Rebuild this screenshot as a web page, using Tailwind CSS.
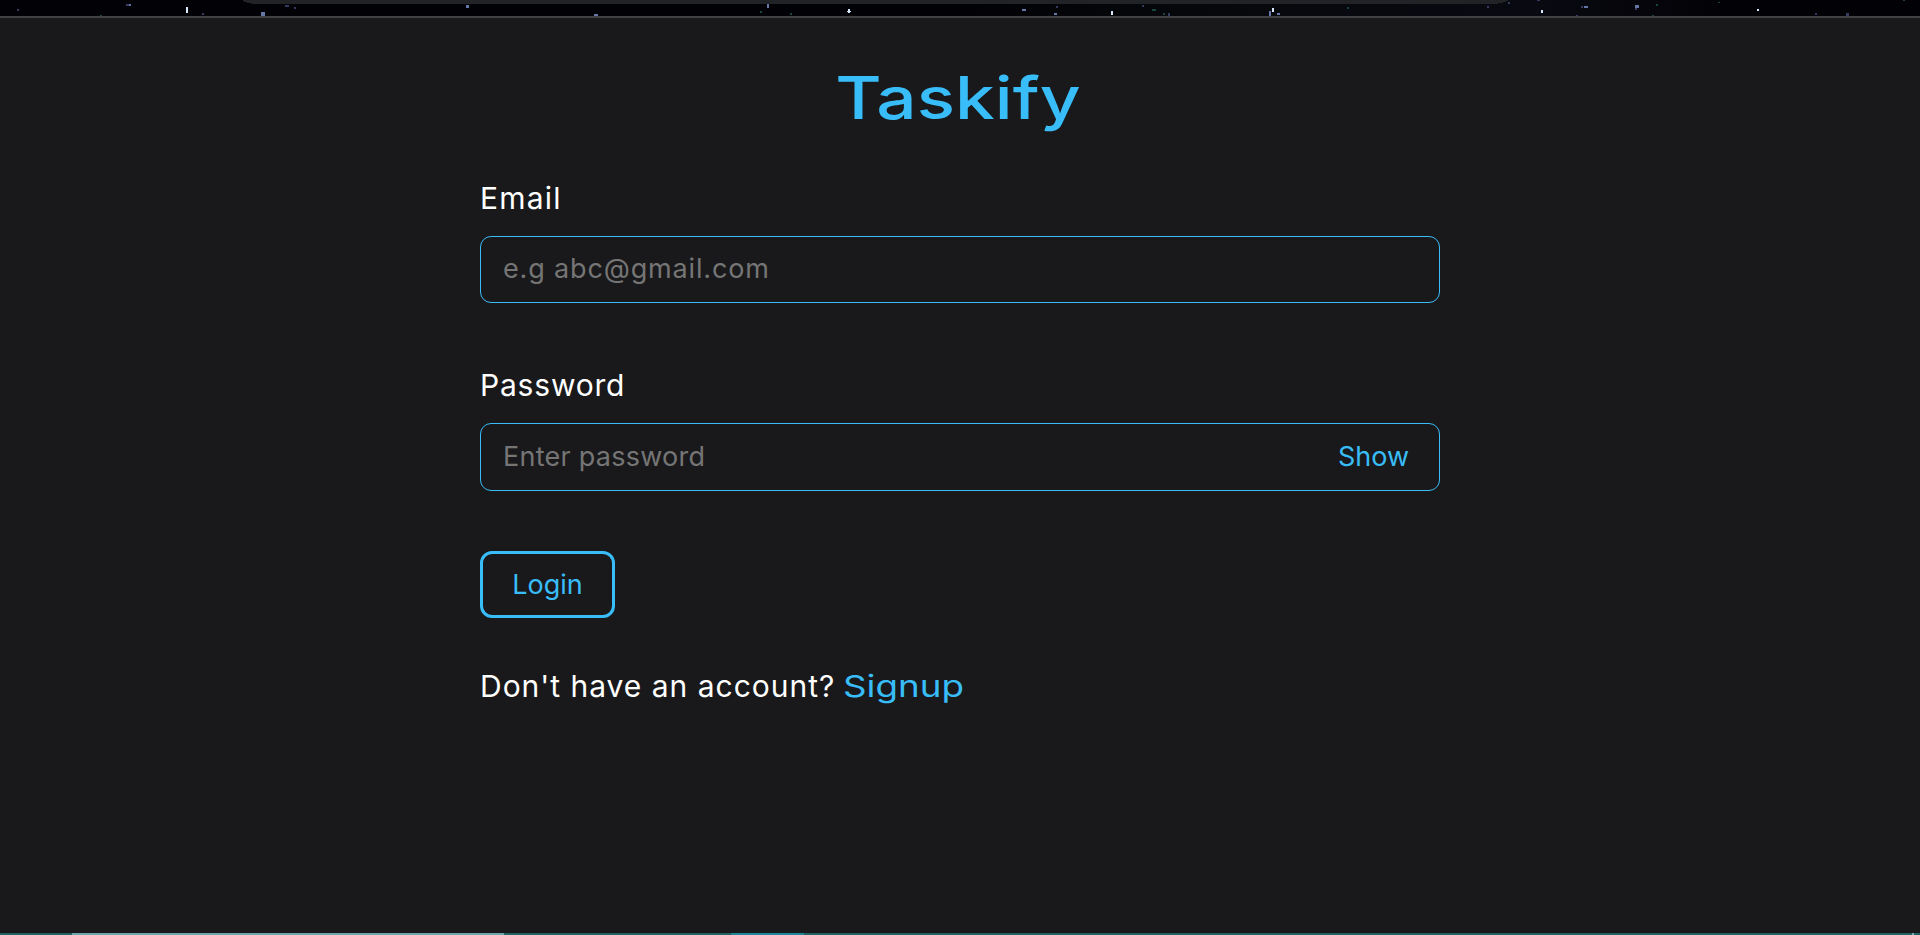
<!DOCTYPE html>
<html lang="en">
<head>
<meta charset="utf-8">
<title>Taskify</title>
<script src="https://cdn.jsdelivr.net/npm/@tailwindcss/browser@4"></script>
</head>
<body class="flex h-[935px] flex-col overflow-hidden bg-[#19191b] font-['Inter',sans-serif] text-white">
<header class="h-[18px] shrink-0 border-b-2 border-[#414143] bg-[#020206]">
<svg class="block" width="1920" height="16" viewBox="0 0 1920 16" shape-rendering="crispEdges">
<defs><linearGradient id="sky"><stop offset="0" stop-color="#020206"/><stop offset=".5" stop-color="#020206"/><stop offset=".66" stop-color="#07090d"/><stop offset=".8" stop-color="#090911"/><stop offset=".9" stop-color="#020206"/></linearGradient></defs>
<rect width="1920" height="16" fill="url(#sky)"/>
<path d="M242 0Q246 4 258 4H1490Q1503 4 1509 0Z" fill="#222326"/>
<g fill="#353a60"><path d="M126 4h3v2h-3zM202 13h2v2h-2zM285 5h4v2h-4zM294 7h2v2h-2zM17 9h2v2h-2zM1056 6h2v2h-2zM1142 5h2v2h-2zM1168 13h2v3h-2zM1487 6h2v2h-2zM1508 2h2v2h-2zM1537 0h3v1h-3zM1576 15h2v1h-2zM1581 6h2v2h-2zM1635 8h2v2h-2zM1815 13h2v2h-2zM1846 13h3v3h-3z"/></g>
<g fill="#6476a6"><path d="M129 4h2v2h-2zM261 12h4v4h-4zM466 5h3v3h-3zM594 14h4v2h-4zM767 4h2v4h-2zM1022 9h4v2h-4zM1054 13h3v2h-3zM1584 6h4v2h-4zM1635 5h4v3h-4zM1269 11h2v6h-2zM1277 13h3v2h-3z"/></g>
<g fill="#d7eaff"><path d="M186 7h2v6h-2zM848 9h2v4h-2zM847 11h4v1h-4zM1111 11h2v4h-2zM1272 8h2v4h-2zM1541 10h2v3h-2zM1757 9h2v2h-2z"/></g>
<g fill="#174340"><path d="M100 15h2v1h-2zM760 11h2v2h-2zM790 13h2v2h-2zM1152 9h4v2h-4zM1163 13h2v2h-2zM1347 7h2v2h-2zM1652 15h2v1h-2zM1656 4h2v2h-2zM1718 2h2v1h-2zM1903 0h2v1h-2z"/></g>
</svg>
</header>
<main class="mx-auto flex w-[960px] grow flex-col pt-[40px]">
<h1 class="h-20 pr-[4px] text-center text-[59px] leading-[80px] font-medium text-[#38bdf8]"><span class="inline-block scale-x-[1.205] whitespace-nowrap">Taskify</span></h1>
<form class="flex flex-col items-start">
<label for="email" class="mt-[40px] h-10 text-[30px] leading-10 tracking-[1.2px]">Email</label>
<div class="mt-[18px] flex h-[67px] w-full items-center rounded-[11px] border border-[#38bdf8] px-[22px] pb-px">
<input id="email" class="w-full text-[27px] tracking-[0.85px] outline-none placeholder:text-[#757575]" placeholder="e.g abc@gmail.com"></div>
<label for="password" class="mt-[62px] h-10 text-[30px] leading-10 tracking-[0.8px]">Password</label>
<div class="mt-[18px] flex h-[68px] w-full items-center rounded-[11px] border border-[#38bdf8] pt-px pr-[30px] pl-[22px]">
<input id="password" type="password" class="min-w-0 grow text-[27px] tracking-[0.25px] outline-none placeholder:text-[#757575]" placeholder="Enter password">
<button type="button" class="text-[27px] text-[#38bdf8]">Show</button></div>
<button type="button" class="mt-[60px] flex h-[67px] w-[135px] items-center justify-center rounded-[12px] border-3 border-[#38bdf8] pt-[2px] text-[27px] text-[#38bdf8]">Login</button>
</form>
<p class="mt-[48px] flex h-10 text-[30px] leading-10"><span class="w-[363px] shrink-0 tracking-[0.98px] whitespace-nowrap">Don't have an account?</span><a class="inline-block origin-left scale-x-[1.225] text-[#38bdf8]">Signup</a></p>
</main>
<footer class="flex h-[2px] shrink-0 bg-[#245f66]"><div class="ml-[72px] w-[432px] bg-[#6da5ab]"></div><div class="ml-[227px] w-[73px] bg-[#1b8797]"></div><div class="ml-[1108px] w-[2px] bg-[#7ca6ab]"></div></footer>
</body>
</html>
